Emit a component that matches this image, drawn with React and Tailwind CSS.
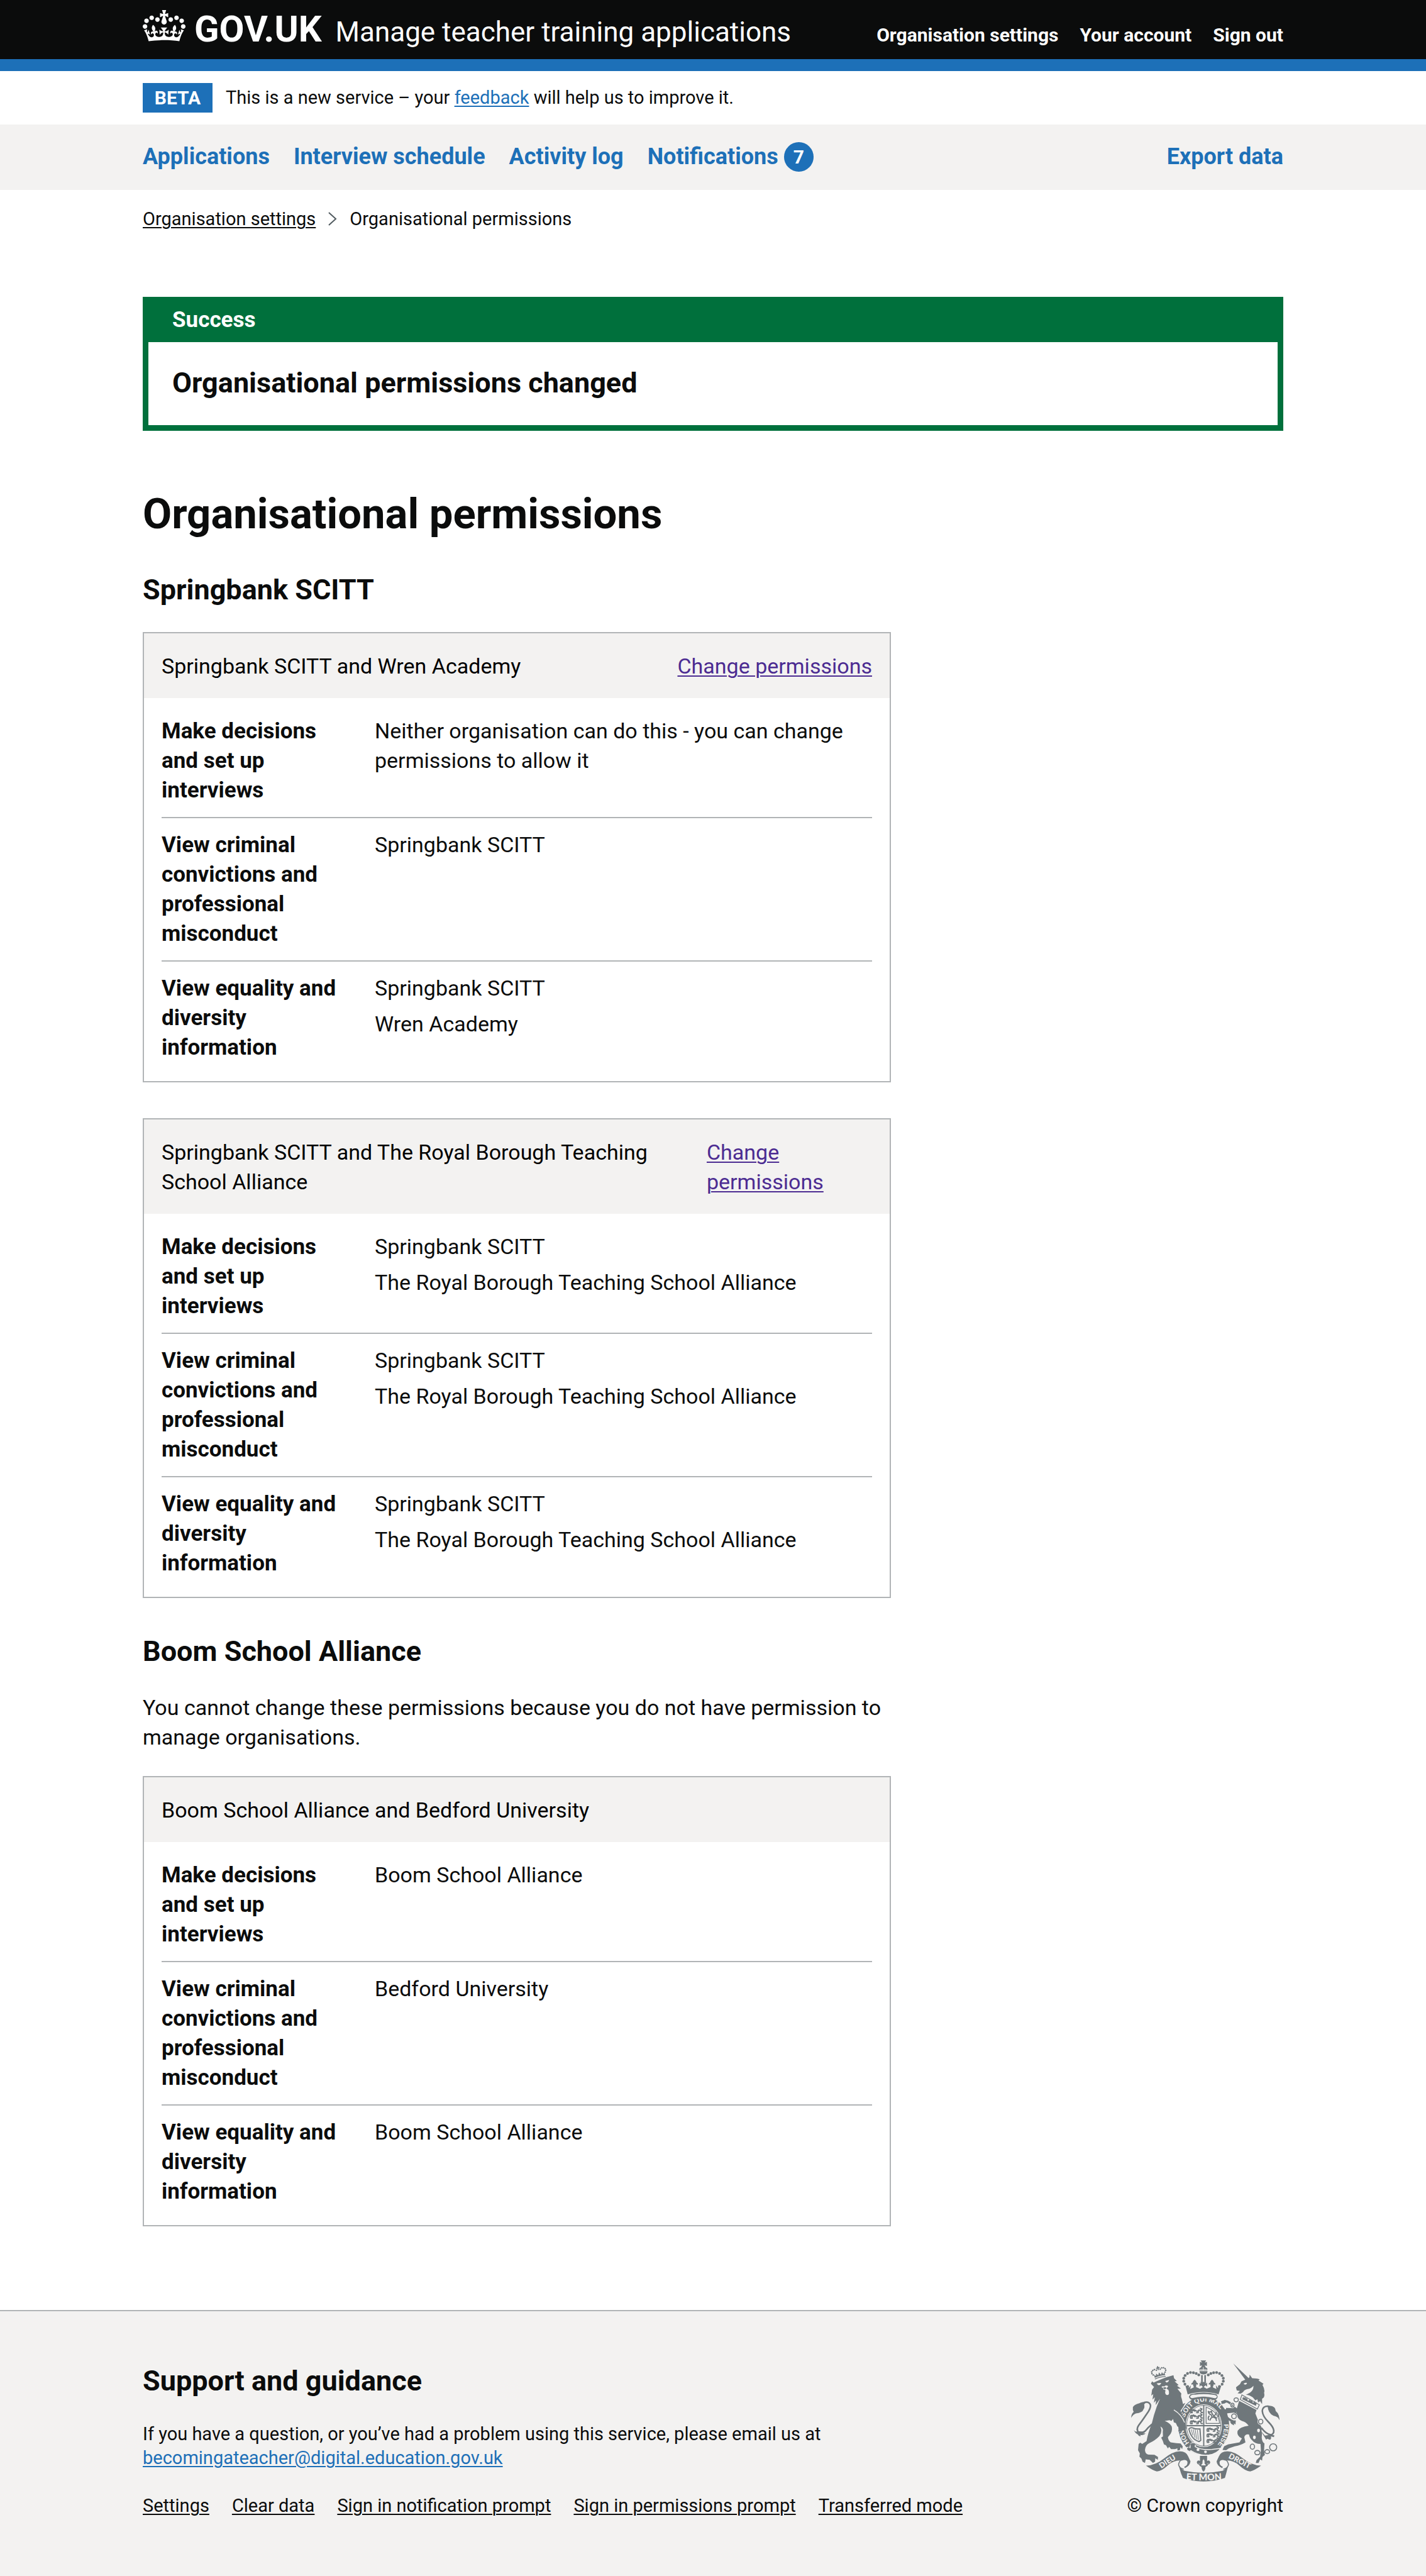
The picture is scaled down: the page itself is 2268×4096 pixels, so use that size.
const INK = "#6f777b";
const PAPER = "#f3f2f1";

function Crown() {
  return (
    <svg viewBox="0 0 132 97" className="-mb-1 h-[50px] w-[68px] shrink-0" aria-hidden="true">
      <path
        fill="currentColor"
        fillRule="evenodd"
        d="M25 30.2c3.5 1.5 7.7-.2 9.1-3.7 1.5-3.6-.2-7.8-3.9-9.2-3.6-1.4-7.6.3-9.1 3.9-1.4 3.5.3 7.5 3.9 9zM9 39.5c3.6 1.5 7.8-.2 9.2-3.7 1.5-3.6-.2-7.8-3.9-9.1-3.6-1.5-7.6.2-9.1 3.8-1.4 3.5.3 7.5 3.8 9zM4.4 57.2c3.5 1.5 7.7-.2 9.1-3.8 1.5-3.6-.2-7.7-3.9-9.1-3.5-1.5-7.6.3-9.1 3.8-1.4 3.5.3 7.6 3.9 9.1zm38.3-21.4c3.5 1.5 7.7-.2 9.1-3.8 1.5-3.6-.2-7.7-3.9-9.1-3.6-1.5-7.6.3-9.1 3.8-1.3 3.6.4 7.7 3.9 9.1zm64.4-5.6c-3.6 1.5-7.8-.2-9.1-3.7-1.5-3.6.2-7.8 3.8-9.2 3.6-1.4 7.7.3 9.2 3.9 1.3 3.5-.4 7.5-3.9 9zm15.9 9.3c-3.6 1.5-7.7-.2-9.1-3.7-1.5-3.6.2-7.8 3.7-9.1 3.6-1.5 7.7.2 9.2 3.8 1.5 3.5-.3 7.5-3.8 9zm4.7 17.7c-3.6 1.5-7.8-.2-9.2-3.8-1.5-3.6.2-7.7 3.9-9.1 3.6-1.5 7.7.3 9.2 3.8 1.3 3.5-.4 7.6-3.9 9.1zM89.3 35.8c-3.6 1.5-7.8-.2-9.2-3.8-1.4-3.6.2-7.7 3.9-9.1 3.6-1.5 7.7.3 9.2 3.8 1.4 3.6-.3 7.7-3.9 9.1zM69.7 17.7l8.9 4.7V9.3l-8.9 2.8c-.2-.3-.5-.6-.9-.9L72.4 0H59.6l3.5 11.2c-.3.3-.6.5-.9.9l-8.8-2.8v13.1l8.8-4.7c.3.3.6.7.9.9l-5 15.4v.1c-.2.8-.4 1.6-.4 2.4 0 4.1 3.1 7.5 7 8.1h.2c.3 0 .7.1 1 .1.4 0 .7 0 1-.1h.2c4-.6 7.1-4.1 7.1-8.1 0-.8-.1-1.7-.4-2.4V34l-5.1-15.4c.4-.2.7-.6 1-.9zM66 92.8c16.9 0 32.8 1.1 47.1 3.2 4-16.9 8.9-26.7 14-33.5l-9.6-3.4c1 4.9 1.1 7.2 0 10.2-1.5-1.4-3-4.3-4.2-8.7L108.6 76c2.8-2 5-3.2 7.5-3.3-4.4 9.4-10 11.9-13.6 11.2-4.3-.8-6.3-4.6-5.6-7.9 1-4.7 5.7-5.9 8-.5 4.3-8.7-3-11.4-7.6-8.8 7.1-7.2 7.9-13.5 2.1-21.1-8 6.1-8.1 12.3-4.5 20.8-4.7-5.4-12.1-2.5-9.5 6.2 3.4-5.2 7.9-2 7.2 3.1-.6 4.3-6.4 7.8-13.5 7.2-10.3-.9-10.9-8-11.2-13.8 2.5-.5 7.1 1.8 11 7.3L80.2 60c-4.1 4.4-8 5.3-12.3 5.4 1.4-4.4 8-11.6 8-11.6H55.5s6.4 7.2 7.9 11.6c-4.2-.1-8-1-12.3-5.4l1.4 16.4c3.9-5.5 8.5-7.7 10.9-7.3-.3 5.8-.9 12.8-11.1 13.8-7.2.6-12.9-2.9-13.5-7.2-.7-5 3.8-8.3 7.1-3.1 2.7-8.7-4.6-11.6-9.4-6.2 3.7-8.5 3.6-14.7-4.6-20.8-5.8 7.6-5 13.9 2.2 21.1-4.7-2.6-11.9.1-7.7 8.8 2.3-5.5 7.1-4.2 8.1.5.7 3.3-1.3 7.1-5.7 7.9-3.5.7-9-1.8-13.5-11.2 2.5.1 4.7 1.3 7.5 3.3l-4.7-15.4c-1.2 4.4-2.7 7.2-4.3 8.7-1.1-3-.9-5.3 0-10.2l-9.5 3.4c5 6.9 9.9 16.7 14 33.5 14.8-2.1 30.8-3.2 47.7-3.2z"
      />
    </svg>
  );
}

function CrestCrown() {
  const pearls = [
    [418, 222], [404, 210], [398, 195], [398, 180], [405, 166], [417, 156], [432, 151], [447, 152], [461, 156], [474, 163],
  ];
  return (
    <g>
      <path d="M483 90h28l-7 11 11-4v22l-11-5 4 10 9 6v10h-40v-10l9-6 4-10-10 5V97l11 4z" />
      <path d="M497 124v16M479 136h36" stroke={PAPER} strokeWidth="3" />
      <path d="M478 144h40q2 15-20 17q-22-2-20-17z" />
      {pearls.map(([x, y]) => (
        <g key={x + "-" + y}>
          <circle cx={x} cy={y} r="7" />
          <circle cx={996 - x} cy={y} r="7" />
        </g>
      ))}
      <path d="M486 164h8v36h-8zM502 164h8v36h-8z" />
      <path d="M406 216l18 12 10-12-3 19 18-9-5-16-6 3q-4-8 4-10 3-10 11-16 8 6 11 16 9 2 4 10l-6-3-2 14 20 9 15-9-10-8-7 7v-20l8 5-4-9h30l-4 9 8-5v20l-8-7-9 8 15 9 20-9-2-14-6 3q-5-8 4-10 3-10 11-16 8 6 11 16 8 2 4 10l-6-3-5 16 18 9-3-19 10 12 18-12-14 46q-76-24-156 0z" />
      <path d="M432 261q66-17 132 0l6 12q-4 18-20 17-52-17-104 0-18 0-22-17z" />
      <path d="M430 272q8-10 24-9 44-6 90 0 16 0 22 9-2 9-12 9-56-16-114 0-9-1-10-9z" fill={PAPER} />
    </g>
  );
}

function MiniLions({ x, y }) {
  const rows = [0, 28, 56];
  return (
    <g fill="none" stroke={INK} strokeWidth="6" strokeLinecap="round" strokeLinejoin="round">
      {rows.map((dy) => (
        <path
          key={dy}
          d={`M${x} ${y + dy + 16}q-2-14 8-12m2 2q10-4 18 2t20-4m2-8l8 3-3 6m-6 0l6 12 6 0m-20-12l-2 13h-8m-16-16l-8 7 2 9h-8m12-12l10 4`}
        />
      ))}
    </g>
  );
}

function Garter() {
  return (
    <g>
      <ellipse cx="499" cy="420" rx="129" ry="148" />
      <ellipse cx="499" cy="420" rx="92" ry="108" fill={PAPER} />
      <ellipse cx="499" cy="420" rx="87" ry="103" fill="none" stroke={INK} strokeWidth="3" />
      <path d="M499 316v208M411 420h176" stroke={INK} strokeWidth="6" />
      <MiniLions x={432} y={336} />
      <MiniLions x={516} y={430} />
      <path d="M511 326v82h68q-4-58-68-82z" fill="none" stroke={INK} strokeWidth="4" />
      <path
        d="M524 392q-6-14 4-22m2 24q4-16 16-18l14 6 4 14m-22-18l-6-14q-12-2-14-16l8 4 8-6 2 10 10 16 16 10m-16-10l12-12-2-8m12 6l2 18"
        fill="none"
        stroke={INK}
        strokeWidth="6"
        strokeLinejoin="round"
      />
      <path d="M424 436q10-10 22-4 10 6 34 4l4 58-8 6q-40-10-52-64z" fill="none" stroke={INK} strokeWidth="6" />
      <path d="M436 438l8 30M446 438l8 42M456 440l7 48M467 442l5 50" stroke={INK} strokeWidth="3" />
      <g
        fill={PAPER}
        fontFamily='"Liberation Sans", Arial, sans-serif'
        fontWeight="700"
        fontSize="33"
      >
        <path id="garter-left" d="M428 508A110 129 0 0 1 396 410" fill="none" />
        <path id="garter-top" d="M402 382A109 127 0 0 1 610 392" fill="none" />
        <path id="garter-right" d="M600 404A106 126 0 0 1 556 528" fill="none" />
        <text>
          <textPath href="#garter-left" startOffset="2">HON</textPath>
        </text>
        <text fontSize="34">
          <textPath href="#garter-top" startOffset="2">SOIT QUI MAL</textPath>
        </text>
        <text fontSize="33">
          <textPath href="#garter-right" startOffset="8">PENSE</textPath>
        </text>
      </g>
      <path d="M430 514q12-14 28-4l-2 16q30 18 84 14l46-6q-20 28-60 34-50 6-92-22-20 8-22-12 4-8 18-4z" stroke={PAPER} strokeWidth="5" />
      <path d="M430 548q-14-14 0-34 16-10 30 2" fill="none" stroke={INK} strokeWidth="4" />
      <circle cx="470" cy="541" r="7" fill={PAPER} />
      <circle cx="508" cy="552" r="7" fill={PAPER} />
    </g>
  );
}

function Lion() {
  return (
    <g transform="translate(120 78)">
      <path d="M118 334q-22 18-34 34-18 14-34 8-14-16 0-36 16-20 40-56 22-30 20-46-6-20-32-14" fill="none" stroke={INK} strokeWidth="8" />
      <path d="M92 220q-26 0-38 8-28 8-33 20-2 14 4 24-12 10-13 30 12-18 24-22 34-4 38-20 8-10 4-26z" />
      <path d="M26 364q8 12 22 6l24 2 14-6q-2 14-16 14 10 2 16 0-12 14-28 8 4 6 0 8-10-4-12-10-14-6-20-22z" />
      <path
        d="M112 130L118 118 126 124Q150 112 192 96L226 87 229 102 243 116 232 118 252 136 244 140 264 154 246 155 266 180Q262 192 268 206L274 232 286 227 276 246 262 266 276 300 287 330 291 352 286 372 275 364 264 374 250 370 256 358 266 354 246 346 238 328 228 325 224 308 216 318 206 314 182 318Q206 326 217 345 222 366 212 382L198 400Q200 418 212 426L240 430 262 432 273 446 270 460 262 450 258 466 246 467 246 456 234 460 214 460 204 448 198 457 188 440 178 436 172 418 164 402 173 396 172 372Q176 354 160 346 172 372 155 394 134 416 104 430 84 440 82 465 84 486 100 488L130 489 148 500 147 514 134 506 133 524 122 530 106 514 86 512 82 530 70 524 64 508 54 498 56 482 47 466 50 434 58 428 68 434 90 420Q98 374 115 336 126 288 142 244L158 206 136 238 138 214 127 226 132 198 120 210 124 182 114 190 118 160 128 146z"
      />
      <path d="M141 128q12-2 23-2-4 14-16 10zM184 116l20-5q-4 14-14 12zM165 146q8-6 14-2 8-10 20-2-2 8-8 10 4 8 9 8 6 12 3 22-8 10-17 0-4-10 0-18-4-6-12-6 4-6-9-12z" fill={PAPER} />
      <path d="M172 150l12-4 8 6-10 6z" />
      <path d="M228 262q40 24 54 64" fill="none" stroke={PAPER} strokeWidth="4" />
      <g transform="rotate(-14 155 82)">
        <path d="M128 94v-16l8 8 4-12 8 12 7-14 7 14 8-12 4 12 8-8v16q-27-6-54 0zM127 98q28-6 56 0v4q-28-6-56 0z" />
        <path d="M152 40h6v6h6v6h-6v8h-6v-8h-6v-6h6z" />
        {[[124, 78], [119, 70], [120, 61], [127, 55], [136, 53], [145, 58]].map(([x, y]) => (
          <g key={x}>
            <circle cx={x} cy={y} r="4" />
            <circle cx={310 - x} cy={y} r="4" />
          </g>
        ))}
      </g>
    </g>
  );
}

function Unicorn() {
  return (
    <g transform="translate(588 78)">
      <path d="M60 27l78 74-15 11z" />
      <path d="M130 105L142 98 143 84 156 102Q180 102 194 108L188 114 213 130 208 136Q222 160 216 176 220 190 214 200L206 206 206 233 196 218 186 224 182 208 172 214 160 200Q140 184 124 186L146 174Q164 162 162 140 152 154 132 157 116 160 110 172L98 180 82 178 94 166 78 164 74 148 94 132 102 118z" />
      <path d="M112 130q8-8 18-4-2 10-12 8zM76 160l8-3" fill={PAPER} />
      <path d="M104 186L192 236 182 258 96 210z" fill={PAPER} stroke={INK} strokeWidth="4" />
      <path d="M106 208l4-12 6 6 4-8 4 10 6-2 4 14 6-2 4-8 4 10 7-2 4 12 6-2 4-8 4 10 6 0-4 16z" />
      <path d="M90 216L178 262 172 280Q182 308 196 336 206 350 203 368 208 384 204 402 206 424 218 432L216 466 220 490 208 500 206 518 196 512 188 530 174 530 178 516 196 498 200 466 198 434Q170 434 154 414 142 402 140 386 120 382 116 400L122 426Q100 440 68 446L38 456 24 466 6 464 14 446 34 436 92 426 104 406Q76 394 82 368 94 348 138 342 124 322 104 318 84 310 80 292L76 262z" />
      <path d="M84 268q-34-6-62-4l4 34q20 20 46 26M80 262q-20-12-36-34-14-12-28-10l-16 6" fill="none" stroke={INK} strokeWidth="11" strokeLinejoin="round" />
      <path d="M4 218l14-6 14 8-16 10-16 2zM44 322l28-8 0 22-8-6 0 10-14-8zM24 252l44 2 14 34-20-12-38 4z" />
      <path d="M202 352q24 32 48 36 16-4 15-22-2-18-28-44-28-28-30-54 2-28 34-24" fill="none" stroke={INK} strokeWidth="8" />
      <path d="M234 242q22-4 34 8 6 6 7 18 20 16 19 46-6-18-30-22-28-12-30-50z" />
      <path d="M198 366l22 26 28-4 20 2-2 10-16-4q4 10-2 16-6 2-14-4l-8 4-8-14z" />
      <g fill="none" stroke={PAPER} strokeWidth="10">
        <ellipse cx="75" cy="211" rx="11" ry="10" />
        <ellipse cx="56" cy="238" rx="8" ry="10" />
        <ellipse cx="64" cy="294" rx="12" ry="12" />
        <ellipse cx="199" cy="321" rx="11" ry="12" />
      </g>
      <g fill="none" stroke={INK} strokeWidth="5">
        <ellipse cx="75" cy="211" rx="11" ry="10" />
        <ellipse cx="56" cy="238" rx="8" ry="10" />
        <ellipse cx="64" cy="294" rx="12" ry="12" />
        <ellipse cx="199" cy="321" rx="11" ry="12" />
        <ellipse cx="157" cy="448" rx="11" ry="13" />
        <ellipse cx="182" cy="478" rx="13" ry="11" />
        <ellipse cx="232" cy="473" rx="12" ry="10" />
        <circle cx="262" cy="451" r="18" />
      </g>
      <ellipse cx="188" cy="366" rx="7" ry="9" fill={PAPER} />
      <ellipse cx="167" cy="401" rx="7" ry="9" fill={PAPER} />
    </g>
  );
}

function Motto() {
  return (
    <g>
      <path d="M480 572h36v26q12-8 16 6-2 12-12 12 0 8-12 12 0 16-10 24-10-8-10-24-12-4-12-12-10 0-12-12 4-14 16-6z" />
      <path d="M498 586q-9 10-7 26l-8 6q-4-14-12-10 0 8 8 6l10 8h18l10-8q8 2 8-6-8-4-12 10l-8-6q2-16-7-26zM498 630v14" fill={PAPER} stroke={INK} strokeWidth="3" />
      <path d="M207 622Q256 620 300 584 342 550 376 549 410 548 420 574L432 600Q430 622 404 634L400 628Q422 618 416 600 408 588 388 596 350 592 318 620 286 650 262 651 240 646 207 622z" />
      <path d="M388 590q-16 12-16 28 4 16 26 22" fill="none" stroke={INK} strokeWidth="5" />
      <path d="M789 622Q740 620 696 584 654 550 620 549 586 548 576 574L564 600Q566 622 592 634L596 628Q574 618 580 600 588 588 608 596 646 592 678 620 710 650 734 651 756 646 789 622z" />
      <path d="M608 590q16 12 16 28-4 16-26 22" fill="none" stroke={INK} strokeWidth="5" />
      <path d="M370 612Q380 636 402 648 450 658 498 658 546 658 594 648 616 636 626 612L618 640Q612 664 606 684 560 702 498 702 436 702 394 684 384 664 378 640z" />
      <g fill={PAPER} fontFamily='Lato, "Liberation Sans", sans-serif' fontWeight="900">
        <path id="motto-left" d="M274 644Q320 612 372 580" fill="none" />
        <path id="motto-right" d="M610 576Q670 606 740 644" fill="none" />
        <path id="motto-base" d="M400 692Q498 700 600 692" fill="none" />
        <text fontSize="38">
          <textPath href="#motto-left" startOffset="50%" textAnchor="middle">DIEU</textPath>
        </text>
        <text fontSize="38">
          <textPath href="#motto-right" startOffset="50%" textAnchor="middle">DROIT</textPath>
        </text>
        <text fontSize="46">
          <textPath href="#motto-base" startOffset="50%" textAnchor="middle">ET MON</textPath>
        </text>
      </g>
    </g>
  );
}

function RoyalArms() {
  return (
    <svg viewBox="132 90 750 612" className="h-[193px] w-[236px]" fill={INK} aria-hidden="true">
      <Garter />
      <CrestCrown />
      <Lion />
      <Unicorn />
      <Motto />
    </svg>
  );
}

function Container({ className = "", children }) {
  return (
    <div className="px-8">
      <div className={"mx-auto w-full max-w-[1814px] " + className}>{children}</div>
    </div>
  );
}

const LABELS = [
  "Make decisions and set up interviews",
  "View criminal convictions and professional misconduct",
  "View equality and diversity information",
];

function PermissionsCard({ title, action, actionClass = "", values, className = "" }) {
  return (
    <section className={"border-2 border-[#b1b4b6] " + className}>
      <header className="flex justify-between bg-[#f3f2f1] px-7 pt-[29px] pb-[27px] text-black">
        <h3>{title}</h3>
        {action && (
          <a href="#change" className={"shrink-0 text-[#4c2c92] underline decoration-2 underline-offset-[3px] " + actionClass}>
            {action}
          </a>
        )}
      </header>
      <dl className="px-7 pt-[10px] pb-[11px]">
        {LABELS.map((label, i) => (
          <div key={label} className="flex border-b-2 border-[#b1b4b6] py-[19px] last:border-b-0">
            <dt className="w-[30%] shrink-0 pr-[38px] text-[35px] font-bold">{label}</dt>
            <dd className="flex flex-col gap-[10px]">
              {values[i].map((v) => (
                <p key={v}>{v}</p>
              ))}
            </dd>
          </div>
        ))}
      </dl>
    </section>
  );
}

const ROYAL = ["Springbank SCITT", "The Royal Borough Teaching School Alliance"];

export default function App() {
  return (
    <div className="bg-white font-[Roboto,Arial,sans-serif] text-[34px] leading-[47px] text-[#0b0c0c]">
      <header className="border-b-[19px] border-[#1d70b8] bg-[#0b0c0c] text-white">
        <Container className="flex items-baseline justify-between pt-[16px] pb-[19px]">
          <div className="flex items-baseline gap-[22px] text-[44px] leading-none">
            <a href="#home" className="flex items-baseline gap-[14px] text-[58px] leading-none font-bold">
              <Crown />
              GOV.UK
            </a>
            <a href="#service">Manage teacher training applications</a>
          </div>
          <nav aria-label="Account" className="flex gap-[34px] text-[30px] leading-none font-bold">
            <a href="#organisation">Organisation settings</a>
            <a href="#account">Your account</a>
            <a href="#signout">Sign out</a>
          </nav>
        </Container>
      </header>

      <Container className="flex items-center gap-[21px] py-[19px] text-[29px]">
        <strong className="flex h-[47px] w-[111px] items-center justify-center bg-[#1d70b8] text-[30px] font-bold text-white">BETA</strong>
        <p>
          This is a new service – your{" "}
          <a href="#feedback" className="text-[#1d70b8] underline decoration-2 underline-offset-[3px]">
            feedback
          </a>{" "}
          will help us to improve it.
        </p>
      </Container>

      <nav aria-label="Primary" className="bg-[#f3f2f1] text-[36px] font-bold text-[#1d70b8]">
        <Container className="flex items-center gap-[38px] pt-[28px] pb-[29px]">
          <a href="#applications">Applications</a>
          <a href="#interviews">Interview schedule</a>
          <a href="#activity">Activity log</a>
          <a href="#notifications" className="flex items-center gap-[9px]">
            Notifications
            <span className="flex size-[47px] items-center justify-center rounded-full bg-[#1d70b8] text-[30px] text-white">7</span>
          </a>
          <a href="#export" className="ml-auto">
            Export data
          </a>
        </Container>
      </nav>

      <Container className="pt-[27px]">
        <nav aria-label="Breadcrumb" className="flex items-center text-[29px] leading-[38px]">
          <a href="#organisation" className="underline decoration-2 underline-offset-[3px]">
            Organisation settings
          </a>
          <svg viewBox="0 0 14 22" className="mx-[20px] h-[22px] w-[14px]" fill="none" stroke="#505a5f" strokeWidth="2" aria-hidden="true">
            <path d="M1 1l11 10L1 21" />
          </svg>
          <span>Organisational permissions</span>
        </nav>

        <main>
          <section role="alert" className="mt-[105px] border-[9px] border-[#00703c] font-bold">
            <h2 className="bg-[#00703c] px-[38px] pt-1 pb-3 text-[35px] text-white">Success</h2>
            <p className="px-[38px] pt-[36px] pb-[39px] text-[45px] leading-[57px]">Organisational permissions changed</p>
          </section>

          <h1 className="mt-[94px] text-[67px] leading-[76px] font-bold">Organisational permissions</h1>

          <div className="w-[65.6%]">
            <h2 className="mt-[54px] text-[45px] leading-[57px] font-bold">Springbank SCITT</h2>
            <PermissionsCard
              className="mt-[39px]"
              title="Springbank SCITT and Wren Academy"
              action="Change permissions"
              values={[
                ["Neither organisation can do this - you can change permissions to allow it"],
                ["Springbank SCITT"],
                ["Springbank SCITT", "Wren Academy"],
              ]}
            />
            <PermissionsCard
              className="mt-[57px]"
              title="Springbank SCITT and The Royal Borough Teaching School Alliance"
              action="Change permissions"
              actionClass="w-[263px]"
              values={[ROYAL, ROYAL, ROYAL]}
            />

            <h2 className="mt-[56px] text-[45px] leading-[57px] font-bold">Boom School Alliance</h2>
            <p className="mt-[38px]">
              You cannot change these permissions because you do not have permission to manage organisations.
            </p>
            <PermissionsCard
              className="mt-[38px]"
              title="Boom School Alliance and Bedford University"
              values={[["Boom School Alliance"], ["Bedford University"], ["Boom School Alliance"]]}
            />
          </div>
        </main>
      </Container>

      <footer className="mt-[133px] border-t-2 border-[#b1b4b6] bg-[#f3f2f1] text-[29px] leading-[38px]">
        <Container className="flex items-end justify-between pt-[78px] pb-[95px]">
          <div>
            <h2 className="text-[45px] leading-[57px] font-bold">Support and guidance</h2>
            <p className="mt-[37px]">
              If you have a question, or you’ve had a problem using this service, please email us at
              <br />
              <a href="mailto:becomingateacher@digital.education.gov.uk" className="text-[#1d70b8] underline decoration-2 underline-offset-[3px]">
                becomingateacher@digital.education.gov.uk
              </a>
            </p>
            <ul className="mt-[38px] flex gap-[36px] underline decoration-2 underline-offset-[3px]">
              <li><a href="#settings">Settings</a></li>
              <li><a href="#clear">Clear data</a></li>
              <li><a href="#notification-prompt">Sign in notification prompt</a></li>
              <li><a href="#permissions-prompt">Sign in permissions prompt</a></li>
              <li><a href="#transferred">Transferred mode</a></li>
            </ul>
          </div>
          <a href="#copyright" className="flex flex-col items-center gap-[19px] text-[30px]">
            <RoyalArms />
            © Crown copyright
          </a>
        </Container>
      </footer>
    </div>
  );
}
